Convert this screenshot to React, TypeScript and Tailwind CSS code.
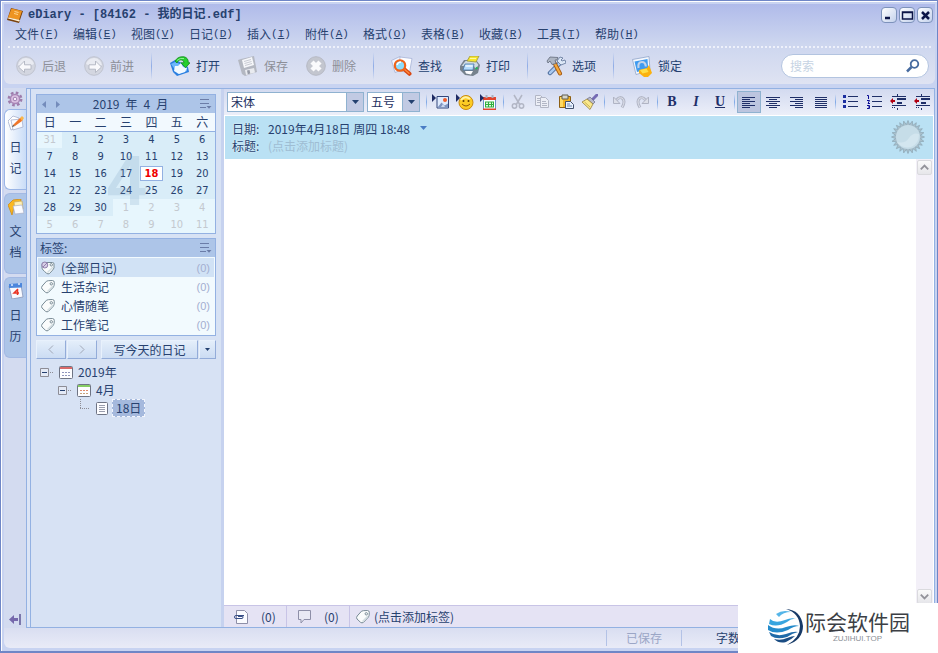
import type { ReactNode } from "react";
import clsx from "clsx";

const MENUS = [
  ["文件", "F"],
  ["编辑", "E"],
  ["视图", "V"],
  ["日记", "D"],
  ["插入", "I"],
  ["附件", "A"],
  ["格式", "O"],
  ["表格", "B"],
  ["收藏", "R"],
  ["工具", "T"],
  ["帮助", "H"],
];

const WEEKDAYS = ["日", "一", "二", "三", "四", "五", "六"];

const WEEKS = [
  [31, 1, 2, 3, 4, 5, 6],
  [7, 8, 9, 10, 11, 12, 13],
  [14, 15, 16, 17, 18, 19, 20],
  [21, 22, 23, 24, 25, 26, 27],
  [28, 29, 30, 1, 2, 3, 4],
  [5, 6, 7, 8, 9, 10, 11],
];

const TAGS = ["(全部日记)", "生活杂记", "心情随笔", "工作笔记"];

/* ---------- toolbar icons ---------- */

function NavIcon({ forward }: { forward?: boolean }) {
  return (
    <svg width="20" height="20" viewBox="0 0 20 20" className={clsx(forward && "-scale-x-100")}>
      <circle cx="10" cy="10" r="9.300" fill="#d3d6e0" stroke="#bfc3cf" />
      <path d="M2 9a8.200 8.200 0 0 1 16-1Q12 12 2 9" fill="#e9ebf2" />
      <path
        d="M8.500 5L2.500 11l6 5.500v-3.300h6.500V8.800H8.500z"
        fill="#f9f9fc"
        stroke="#b0b4c1"
        strokeWidth=".9"
        strokeLinejoin="round"
      />
    </svg>
  );
}

function OpenIcon() {
  return (
    <svg width="20" height="20" viewBox="0 0 20 20">
      <path d="M0 7l5-3 5 2 8 5 1 5-12 4-4-4z" fill="#2b7fe0" />
      <path d="M1 8l4-2 5 2 7 4v3l-9 3z" fill="#6db7fb" />
      <path d="M4 15l1-5 3 0 3-3 2 4 4 1-2 4-6 2z" fill="#f2f9ff" />
      <path
        d="M5 5Q8 0 14 .8q4.500 1 4.300 6H20l-4.500 5-4.500-5h3q0-3-3-3Q8 3.500 7 7z"
        fill="#25cf2e"
        stroke="#128a1c"
        strokeWidth=".8"
      />
      <path d="M7 4.500Q10 1.500 14 2.500" fill="none" stroke="#8cf18f" />
    </svg>
  );
}

function SaveIcon() {
  return (
    <svg width="20" height="20" viewBox="0 0 20 20">
      <path d="M0 4l3-1 13-3 3 16-12 4-3-2z" fill="#b4b8c2" />
      <path d="M4 4l10-3 2 8-10 3z" fill="#f6f7fa" />
      <path d="M7 14l9-2 1 4.500-9 2.500z" fill="#e9ebf0" />
      <path d="M9 14.500l2.500-.5.8 3.500-2.500.7z" fill="#969aa6" />
      <path d="M6 5.500l7-2M6.500 7.500l7-2M7 9.500l7-2" stroke="#c8cbd3" />
    </svg>
  );
}

function DeleteIcon() {
  return (
    <svg width="20" height="20" viewBox="0 0 20 20">
      <circle cx="10" cy="10" r="9.300" fill="#c3c6cf" stroke="#b6b9c4" />
      <path d="M6 6l8 8M14 6l-8 8" stroke="#fafafc" strokeWidth="4.500" />
    </svg>
  );
}

function FindIcon() {
  return (
    <svg width="22" height="20" viewBox="0 0 22 20" className="shrink-0">
      <path d="M.5 4.500L9 .5l3 13-8 3z" fill="#f2f5fe" stroke="#a6b2d6" strokeWidth=".8" />
      <path d="M9 1l12 1.500-2.500 14L8 15z" fill="#fdfdff" stroke="#a6b2d6" strokeWidth=".8" />
      <path d="M13 13l5.500 4.800" stroke="#d94712" strokeWidth="4" strokeLinecap="round" />
      <path d="M13 13l5 4.200" stroke="#ff8a3c" strokeWidth="1.500" strokeLinecap="round" />
      <circle cx="9" cy="9.500" r="5.200" fill="#8edcfb" stroke="#f0641a" strokeWidth="2.200" />
      <path d="M6 9q1-3 4-3" stroke="#fff" fill="none" strokeWidth="1.500" />
    </svg>
  );
}

function PrintIcon() {
  return (
    <svg width="20" height="20" viewBox="0 0 20 20">
      <path d="M0 10l4-6h12l4 5-2 8-5 3-8-1-5-5z" fill="#76828d" />
      <path d="M1.500 10l4-5h10l3 4-3 4-2-4z" fill="#cfdbe3" />
      <path d="M7 5l3-5h9l-3 6z" fill="#f6e52f" stroke="#9c9540" strokeWidth=".8" />
      <path d="M10 2.500h6" stroke="#fff9a0" />
      <path d="M5 8h9l-1 6H3z" fill="#b5dcfc" stroke="#4d76a6" strokeWidth=".8" />
      <path d="M5.500 10h7" stroke="#f2faff" strokeWidth="1.500" />
      <path d="M5 15h8l-2 3.500-5-1z" fill="#fdfdff" />
      <path d="M15.500 13l2-1.500" stroke="#25b459" strokeWidth="2" />
    </svg>
  );
}

function OptionsIcon() {
  return (
    <svg width="20" height="20" viewBox="0 0 20 20">
      <path d="M14 7L4 17" stroke="#4e6d9c" strokeWidth="4.500" strokeLinecap="round" />
      <path d="M14 7L4 17" stroke="#a9c9ef" strokeWidth="2.500" strokeLinecap="round" />
      <path d="M14 1l-3 4 4 4 5-2-1-3-3 1-1-1 2-2z" fill="#dce7f6" stroke="#5f7397" strokeWidth=".8" />
      <path d="M8.500 7L14 17.500" stroke="#a65a13" strokeWidth="4" strokeLinecap="round" />
      <path d="M8.500 7L14 17.500" stroke="#f5a93c" strokeWidth="2.200" strokeLinecap="round" />
      <path d="M1 5l3-4 8 .500-1 2.500H9l1 3.500-4 1-2-3.500-2 2z" fill="#aeb6c4" stroke="#626b7b" strokeWidth=".8" />
    </svg>
  );
}

function LockIcon() {
  return (
    <svg width="20" height="21" viewBox="0 0 20 21">
      <path d="M.5 3.500L17 .5l1 14-14 4z" fill="#f6f9fe" stroke="#8fa4c9" strokeWidth=".8" />
      <path d="M2.500 5.500L15.500 3l.7 10L5 16z" fill="#3f9bf0" />
      <path d="M6.500 12Q5.500 6 10 6q3.500 0 3.800 4.500" fill="none" stroke="#c3d3ea" strokeWidth="2.200" />
      <path d="M7 14l8-2 2-3 3 8-4 4h-4l-5-4z" fill="#fbb10d" />
      <path d="M8 14l6.500-1.500 2 3.500-6 1.500z" fill="#ffdf45" />
    </svg>
  );
}

/* ---------- editor icons ---------- */

const Flag = () => <path d="M0 0l4 4-4 4z" fill="#1e2a63" />;

const PictureIcon = () => (
  <svg width="18" height="16" viewBox="0 0 18 16">
    <path d="M5 2.500h11.500v11.500H5z" fill="#dfeafd" stroke="#33477d" />
    <path d="M5.500 13.500l4-5 3 3 3.500-2v4z" fill="#7f94c0" />
    <path d="M9 13l2-3 2 3z" fill="#c9d6ee" />
    <circle cx="13" cy="6" r="2" fill="#ef5b2c" />
    <Flag />
  </svg>
);

const SmileyIcon = () => (
  <svg width="18" height="16" viewBox="0 0 18 16">
    <circle cx="10" cy="8.500" r="7" fill="#fccb24" stroke="#c98a10" />
    <path d="M5 6q4-5 9-1" stroke="#fff2a0" strokeWidth="2" fill="none" />
    <circle cx="7.500" cy="7" r="1" fill="#5f3c05" />
    <circle cx="12.500" cy="7" r="1" fill="#5f3c05" />
    <path d="M6 10q4 4 8 0" stroke="#8e5709" fill="none" />
    <Flag />
  </svg>
);

const InsertDateIcon = () => (
  <svg width="18" height="16" viewBox="0 0 18 16">
    <path d="M3.500 3.500h12v12h-12z" fill="#fff" stroke="#6a90c8" />
    <path d="M3 3h13v3H3zM3 14.500h13v1.500H3z" fill="#e2452e" />
    <path d="M5 7.500h9v6H5z" fill="#2fae3d" />
    <path d="M6 8.500h2v1.500H6zM9 8.500h2v1.500H9zM12 8.500h1v1.500h-1zM6 11h2v1.500H6zM9 11h2v1.500H9zM12 11h1v1.500h-1z" fill="#dff6df" />
    <path d="M6.500 1v3M12.500 1v3" stroke="#aab0be" strokeWidth="2" />
    <Flag />
  </svg>
);

const CutIcon = () => (
  <svg width="16" height="16" viewBox="0 0 16 16" fill="none" stroke="#b2b6c5">
    <path d="M4 1l6 10M12 1L6 11" strokeWidth="1.500" />
    <circle cx="4.500" cy="12" r="2.200" strokeWidth="1.500" />
    <circle cx="11.500" cy="12" r="2.200" strokeWidth="1.500" />
  </svg>
);

const CopyIcon = () => (
  <svg width="16" height="16" viewBox="0 0 16 16" fill="#eceef6" stroke="#b2b6c5">
    <path d="M1.500 1.500h5l2 2v8h-7z" />
    <path d="M6.500 3.500h5l3 3v7h-8z" />
    <path d="M3 4.500h3M3 6.500h3M3 8.500h3M8 7.500h4M8 9.500h5M8 11.500h5" />
  </svg>
);

const PasteIcon = () => (
  <svg width="16" height="16" viewBox="0 0 16 16">
    <path d="M1.500 2.500h11v11h-11z" fill="#f4b321" stroke="#8d5f14" />
    <path d="M2 3h3v10H2z" fill="#ffda63" />
    <path d="M4 1h6v4H4z" fill="#d5d5c9" stroke="#615d4c" />
    <path d="M7.500 7.500h5l3 3v4h-8z" fill="#e9f2ff" stroke="#42516f" />
    <path d="M9 10h3M9 12h5" stroke="#6d84ac" />
  </svg>
);

const BrushIcon = () => (
  <svg width="16" height="16" viewBox="0 0 16 16">
    <path d="M11 5l4-4" stroke="#756bb4" strokeWidth="3" strokeLinecap="round" />
    <path d="M8 3l5 5-2 2-6-5z" fill="#b9bacb" stroke="#666a85" strokeWidth=".7" />
    <path d="M5 5l6 5-3 5.500L0 8z" fill="#fae98c" stroke="#978040" strokeWidth=".8" />
    <path d="M2.500 8l5.500 5" stroke="#cdb34f" />
  </svg>
);

const TurnIcon = ({ redo }: { redo?: boolean }) => (
  <svg
    width="16"
    height="16"
    viewBox="0 0 16 16"
    className={clsx(redo && "-scale-x-100")}
    fill="none"
  >
    <path d="M5 6.500q3-4 6-2.500 4 3 0 9.500" stroke="#b4b8c8" strokeWidth="3" />
    <path d="M5 6.500q3-4 6-2.500 4 3 0 9.500" stroke="#dcdfe9" />
    <path d="M2.500 3v6.500H9z" fill="#dcdfe9" stroke="#b0b4c4" />
  </svg>
);

const AlignIcon = ({ d }: { d: string }) => (
  <svg width="14" height="13" viewBox="0 0 14 13" stroke="#1f2f68" fill="none">
    <path d={d} />
  </svg>
);

const ALIGNS = [
  { label: "左对齐", d: "M0 1.500h13M0 3.500h8M0 5.500h13M0 7.500h8M0 9.500h13M0 11.500h8" },
  { label: "居中", d: "M0 1.500h14M3 3.500h8M0 5.500h14M3 7.500h8M0 9.500h14M3 11.500h8" },
  { label: "右对齐", d: "M0 1.500h13M5 3.500h8M0 5.500h13M5 7.500h8M0 9.500h13M5 11.500h8" },
  { label: "两端对齐", d: "M1 1.500h12M1 3.500h12M1 5.500h12M1 7.500h12M1 9.500h12M1 11.500h12" },
];

const BulletIcon = () => (
  <svg width="15" height="14" viewBox="0 0 15 14">
    <path d="M0 0h3v3H0zM0 5h3v3H0zM0 10h3v3H0z" fill="#1c2fa0" />
    <path d="M5 1.500h10M5 6.500h10M5 11.500h10" stroke="#1f2f68" />
  </svg>
);

const NumberIcon = () => (
  <svg width="15" height="14" viewBox="0 0 15 14" fill="none">
    <path d="M0 .5h1.500V4M0 5.500h2.500L1 8.500h2M0 10.500h2.500v3H0M1 12h1" stroke="#0b0d94" />
    <path d="M5 1.500h10M5 6.500h10M5 11.500h10" stroke="#1f2f68" />
  </svg>
);

const IndentIcon = () => (
  <svg width="16" height="16" viewBox="0 0 16 16" fill="none">
    <path d="M7.500 0v2M7.500 14v2" stroke="#1f2f68" />
    <path d="M2 2.500h14M2 11.500h14" stroke="#1f2f68" />
    <path d="M2 13.500h4" stroke="#1f2f68" strokeDasharray="1 1" />
    <path d="M7 4h9v2H7zM7 8h5v2H7z" fill="#1f2f68" />
    <path d="M0 7l3-3v6z" fill="#b00012" />
    <path d="M2 7h3" stroke="#b00012" strokeWidth="2" />
  </svg>
);

/* ---------- sidebar icons ---------- */

const GearIcon = () => (
  <svg width="16" height="16" viewBox="0 0 16 16" fill="none">
    <circle cx="8" cy="8" r="6.200" stroke="#9d7cab" strokeWidth="2.500" strokeDasharray="2.600 2.270" />
    <circle cx="8" cy="8" r="4.600" fill="#dcc3e3" stroke="#a886b6" strokeWidth="1.500" />
    <circle cx="8" cy="8" r="1.800" fill="#f5effa" stroke="#9f7fb0" />
  </svg>
);

const DiaryIcon = () => (
  <svg width="16" height="16" viewBox="0 0 16 16">
    <path d="M0 6l5-5 6 2-3 10-5 2z" fill="#fff" stroke="#a7b0cd" strokeWidth=".8" />
    <path d="M3 5l11-1 1 8-10 3z" fill="#fafbff" stroke="#a7b0cd" strokeWidth=".8" />
    <path d="M5 10L12 3l3 0-1 3-7 5z" fill="#f0762a" />
    <path d="M12 3l2-2 2 2-2 3z" fill="#f9b64b" />
    <path d="M5 10l-1 2 3-1z" fill="#513a2a" />
  </svg>
);

const FolderIcon = () => (
  <svg width="16" height="16" viewBox="0 0 16 16">
    <path d="M0 6l5-5 8-1-1 5-6 3-2 8z" fill="#fbb81f" stroke="#d18b14" strokeWidth=".8" />
    <path d="M6 3l8-1 1 8-8 2z" fill="#fff0b5" stroke="#c9a757" strokeWidth=".7" />
    <path d="M5 7l9-1 2 8-9 1z" fill="#fbfbff" stroke="#a9afc4" strokeWidth=".7" />
  </svg>
);

const CalendarTabIcon = () => (
  <svg width="16" height="16" viewBox="0 0 16 16">
    <path d="M1 3l12-1 2 12-11 2z" fill="#f9faff" stroke="#8997b8" strokeWidth=".8" />
    <path d="M1 1l13-1v4.500L1 5z" fill="#4c87dc" />
    <path d="M4 1v2M11 0v2" stroke="#dce8fb" strokeWidth="1.500" />
    <path d="M10 6l-4 4h5M9.500 6v6" stroke="#ea3524" strokeWidth="1.500" fill="none" />
  </svg>
);

function TagIcon({ all }: { all?: boolean }) {
  return (
    <svg width="14" height="14" viewBox="0 0 14 14">
      <path
        d={
          all
            ? "M3 1.500h8.500q1.500 0 1.500 1.500v4q-.5 1.500-4.500 5.500-1.500 1-3-.3Q1 8.500 1 7V3.500q0-2 2-2"
            : "M5.500 1.200q.8-.7 6-.7 1.700 0 1.800 2 0 3.500-.8 4.500l-5 5.300q-1.500 1.200-3 0L1 9q-1-1.500.2-3z"
        }
        fill="#fafcfc"
        stroke="#788b96"
      />
      <path d="M6.500 11.500L12 6" stroke="#d3dee2" strokeWidth="1.500" />
      <circle cx="10.300" cy="3.800" r="1.200" fill="#fff" stroke="#788b96" />
      {all && <circle cx="3.800" cy="4" r="3" fill="#d7cee6" stroke="#9280ad" />}
      {all && <path d="M2 6l4-4" stroke="#9280ad" />}
    </svg>
  );
}

const MonthIcon = ({ green }: { green?: boolean }) => (
  <svg width="14" height="13" viewBox="0 0 14 13">
    <rect x=".5" y=".5" width="13" height="12" rx="1" fill="#fdfdff" stroke="#6e7484" />
    <path d="M1 1h12v2H1z" fill={green ? "#86cd65" : "#d96a6a"} />
    <path d="M3 6h2v1H3zM6 6h2v1H6zM9 6h2v1H9z" fill={green ? "#e08c6d" : "#8f95bd"} />
    <path d="M3 9h2v1H3zM6 9h2v1H6zM9 9h2v1H9z" fill={green ? "#c8a27c" : "#8f95bd"} />
  </svg>
);

const PageIcon = () => (
  <svg width="12" height="13" viewBox="0 0 12 13">
    <rect x=".5" y=".5" width="11" height="12" rx="1" fill="#fdfdff" stroke="#6e7484" />
    <path d="M3 3.500h6M3 5.500h6M3 7.500h6M3 9.500h6" stroke="#9a9eae" />
  </svg>
);

const ListMenuIcon = () => (
  <svg width="12" height="10" viewBox="0 0 12 10">
    <path d="M0 .5h9M0 4.500h9M0 8.500h6" stroke="#6b7da8" />
    <path d="M6.500 7h5L9 9.800z" fill="#6b7da8" />
  </svg>
);

const Expander = () => (
  <svg width="14" height="9" viewBox="0 0 14 9">
    <path d="M.5.5h8v8h-8z" fill="#e4eaf6" stroke="#8d8d96" />
    <path d="M2 4.500h5" stroke="#24406f" />
    <path d="M10 4.500h4" stroke="#8d8d96" strokeDasharray="1 1" />
  </svg>
);

const DownArrow = () => (
  <svg width="7" height="4" viewBox="0 0 7 4" fill="currentColor">
    <path d="M0 0h7L3.500 4z" />
  </svg>
);

function ToolButton({
  icon,
  label,
  disabled,
}: {
  icon: ReactNode;
  label: string;
  disabled?: boolean;
}) {
  return (
    <button
      className={clsx(
        "flex h-7 w-[68px] shrink-0 items-center gap-1.5 pl-[9px] whitespace-nowrap",
        disabled ? "text-[#8d8f98]" : "text-[#23406f]",
      )}
      disabled={disabled}
    >
      <span className="flex w-5 shrink-0 justify-center">{icon}</span>
      {label}
    </button>
  );
}

const ToolDivider = () => (
  <span className="flex w-[18px] shrink-0 pl-2">
    <span className="h-7 w-px bg-linear-to-b from-transparent via-[#8face6] to-transparent" />
  </span>
);

function EditButton({
  children,
  label,
  active,
}: {
  children: ReactNode;
  label: string;
  active?: boolean;
}) {
  return (
    <button
      aria-label={label}
      className={clsx(
        "flex h-[22px] w-6 shrink-0 items-center justify-center",
        active && "border border-[#8fb2d0] bg-[#bcc5df]",
      )}
    >
      {children}
    </button>
  );
}

const EditDivider = () => (
  <span className="flex w-[5px] shrink-0 justify-center">
    <span className="h-4 w-px bg-linear-to-b from-transparent via-[#7fa8e6] to-transparent" />
  </span>
);

function Combo({ label, value, className }: { label: string; value: string; className: string }) {
  return (
    <span className={clsx("relative flex h-5 shrink-0", className)}>
      <select
        aria-label={label}
        className="w-full appearance-none border border-[#8fb2d0] bg-white pl-[3px] text-[12px] text-[#1c2f60]"
      >
        <option>{value}</option>
      </select>
      <span className="pointer-events-none absolute inset-y-px right-px flex w-[17px] items-center justify-center border-l border-[#8fb2d0] bg-[#c1cae3] text-[#23406f]">
        <DownArrow />
      </span>
    </span>
  );
}

function Header() {
  return (
    <header className="rounded-b-md bg-linear-to-b from-[#b0bbea] via-[#cdd6ef] to-[#dfe3f2]">
      <div className="flex h-[22px] items-center pr-0.5 pl-[3px]">
        <svg width="16" height="15" viewBox="0 0 16 15">
          <path d="M4 0l12 3-4 12L0 12z" fill="#7a420d" />
          <path d="M4.500 .5L15 3l-3 9L1 9.500z" fill="#ee9422" />
          <path d="M1 10.500l11 3 1-1.500L1.500 9.500z" fill="#fff3d8" />
          <path d="M7.500 3.500l4 1M7 5.500l4 1" stroke="#ffd792" />
        </svg>
        <h1 className="ml-[5px] flex-1 font-['Liberation_Mono','Noto_Sans_CJK_SC',monospace] text-[12px] leading-5 font-bold text-[#27416f]">
          eDiary - [84162 - 我的日记.edf]
        </h1>
        <div className="flex gap-0.5">
          {["M3 10h5", "M2.500 4h10v7h-10zM2.500 4.500h10", "M4 4l7 7M11 4l-7 7"].map((d, i) => (
            <button
              key={d}
              aria-label={["最小化", "最大化", "关闭"][i]}
              className="flex size-4 items-center justify-center rounded-[4px] border border-[#7d92bb] bg-linear-to-br from-white to-[#c3d1ec]"
            >
              <svg
                width="15"
                height="15"
                viewBox="0 0 15 15"
                fill="none"
                stroke="#0c1547"
                strokeWidth={i === 1 ? 1.5 : 2.5}
                className="shrink-0"
              >
                <path d={d} />
              </svg>
            </button>
          ))}
        </div>
      </div>

      <nav className="flex h-4 items-center pl-1">
        {MENUS.map(([name, key]) => (
          <button
            key={key}
            className="flex h-4 w-[58px] items-center justify-center whitespace-nowrap text-[#27416f]"
          >
            {name}
            <span className="font-['Liberation_Mono',monospace] text-[11px]">
              (<u>{key}</u>)
            </span>
          </button>
        ))}
      </nav>

      <div className="mx-1 mt-1 border-b-2 border-dotted border-[#eef1fb]" />

      <div className="flex h-9 items-center pr-1.5 pl-[3px]">
        <ToolButton icon={<NavIcon />} label="后退" disabled />
        <ToolButton icon={<NavIcon forward />} label="前进" disabled />
        <ToolDivider />
        <ToolButton icon={<OpenIcon />} label="打开" />
        <ToolButton icon={<SaveIcon />} label="保存" disabled />
        <ToolButton icon={<DeleteIcon />} label="删除" disabled />
        <ToolDivider />
        <ToolButton icon={<FindIcon />} label="查找" />
        <ToolButton icon={<PrintIcon />} label="打印" />
        <ToolDivider />
        <ToolButton icon={<OptionsIcon />} label="选项" />
        <ToolDivider />
        <ToolButton icon={<LockIcon />} label="锁定" />
        <label className="ml-auto flex h-6 w-[148px] items-center rounded-full border border-[#b3c4e0] bg-white pr-2 pl-2">
          <input
            aria-label="搜索"
            placeholder="搜索"
            className="min-w-0 flex-1 outline-none placeholder:text-[#c6d3e3]"
          />
          <svg width="14" height="14" viewBox="0 0 14 14" fill="none" stroke="#466a9f">
            <circle cx="8.500" cy="5" r="3.800" strokeWidth="1.800" />
            <path d="M5.500 8L1 12.500" strokeWidth="2.500" />
          </svg>
        </label>
      </div>
    </header>
  );
}

const RAIL = [
  { name: "日记", icon: <DiaryIcon /> },
  { name: "文档", icon: <FolderIcon /> },
  { name: "日历", icon: <CalendarTabIcon /> },
];

function Rail() {
  return (
    <div className="flex w-[22px] shrink-0 flex-col items-center bg-[#d3dbf0]">
      <button aria-label="设置" className="flex h-[21px] items-center">
        <GearIcon />
      </button>
      <div className="flex w-full flex-col gap-[3px]">
        {RAIL.map(({ name, icon }, i) => (
          <button
            key={name}
            className={clsx(
              "flex flex-col items-center gap-[5px] rounded-l-md border border-r-0 pt-[5px] pb-[11px]",
              i === 0
                ? "border-[#9ab5e6] bg-linear-to-r from-white to-[#c9dcf7]"
                : "border-[#a3b9e3] bg-[#adc5e8]",
            )}
          >
            {icon}
            <span className="w-3 leading-[21px] break-all">{name}</span>
          </button>
        ))}
      </div>
      <button aria-label="折叠侧栏" className="mt-auto mb-0.5">
        <svg width="12" height="13" viewBox="0 0 12 13">
          <path d="M0 6.500L5 2v3h4v3H5v3z" fill="#7568ac" />
          <path d="M11 1v11" stroke="#5e5796" strokeWidth="1.500" />
        </svg>
      </button>
    </div>
  );
}

function Calendar() {
  return (
    <section className="relative border border-[#93b1e2] bg-[#f2f9fe]">
      <div className="flex h-[18px] items-center bg-[#adc5e8] pr-[3px] pl-[5px]">
        <button aria-label="上个月">
          <svg width="5" height="7" viewBox="0 0 5 7">
            <path d="M4 0v7L0 3.500z" fill="#748cbb" />
          </svg>
        </button>
        <button aria-label="下个月" className="ml-[9px]">
          <svg width="5" height="7" viewBox="0 0 5 7">
            <path d="M0 0v7l4-3.500z" fill="#748cbb" />
          </svg>
        </button>
        <span className="flex flex-1 justify-center gap-1.5">
          <span>2019</span>
          <span>年</span>
          <span>4</span>
          <span>月</span>
        </span>
        <button aria-label="日历选项">
          <ListMenuIcon />
        </button>
      </div>
      <table className="w-full table-fixed border-collapse text-center">
        <thead>
          <tr className="h-[18px] border-b border-[#93b1e2]">
            {WEEKDAYS.map((day) => (
              <th key={day} className="p-0 leading-[17px] font-normal">
                {day}
              </th>
            ))}
          </tr>
        </thead>
        <tbody className="font-['DejaVu_Sans_Condensed','DejaVu_Sans',sans-serif] text-[11px]">
          {WEEKS.map((week, row) => (
            <tr key={row} className="h-[17px]">
              {week.map((day, col) => {
                const outside = (row === 0 && day > 20) || (row > 3 && day < 20);
                const today = row === 2 && day === 18;
                return (
                  <td
                    key={col}
                    className={clsx(
                      "p-0 leading-[15px]",
                      outside ? "bg-[#e7f6fd] text-[#c4c9cf]" : "bg-[#d9edf8]",
                    )}
                  >
                    {today ? (
                      <span className="mx-px block border border-[#93b1e2] bg-white leading-[13px] font-bold text-[#f00000]">
                        18
                      </span>
                    ) : (
                      day
                    )}
                  </td>
                );
              })}
            </tr>
          ))}
        </tbody>
      </table>
      <span
        aria-hidden
        className="pointer-events-none absolute top-[51px] left-[70px] font-['Liberation_Sans',sans-serif] text-[70px] leading-[70px] font-bold text-[#7399c0]/20"
      >
        4
      </span>
    </section>
  );
}

function Sidebar() {
  return (
    <aside className="w-[190px] shrink-0 bg-[#d7e2f4] px-[5px] pt-[5px]">
      <Calendar />

      <section className="mt-1 border border-[#93b1e2] bg-[#f2fafe]">
        <div className="flex h-[18px] items-center justify-between bg-[#adc5e8] pr-[3px] pl-[3px]">
          <h2>标签:</h2>
          <button aria-label="标签选项">
            <ListMenuIcon />
          </button>
        </div>
        <ul className="p-px">
          {TAGS.map((tag, i) => (
            <li key={tag} className={clsx("flex h-[19px] items-center pr-1 pl-[3px]", i === 0 && "bg-[#d1e2f5]")}>
              <TagIcon all={i === 0} />
              <span className="ml-1.5 flex-1">{tag}</span>
              <span className="font-['Liberation_Sans',sans-serif] text-[11px] text-[#a3aed0]">(0)</span>
            </li>
          ))}
        </ul>
      </section>

      <div className="mt-1 flex h-[19px] gap-px *:flex *:items-center *:justify-center *:border *:border-[#93acd9] *:border-t-[#e8f1fc] *:border-l-[#e8f1fc] *:bg-linear-to-b *:from-[#e4eefa] *:to-[#cbdcf3]">
        <button aria-label="前一篇" className="w-[30px]">
          <svg width="6" height="9" viewBox="0 0 6 9" fill="none" stroke="#a0a7b6">
            <path d="M5 .5l-4 4 4 4" />
          </svg>
        </button>
        <button aria-label="后一篇" className="w-[30px]">
          <svg width="6" height="9" viewBox="0 0 6 9" fill="none" stroke="#a0a7b6">
            <path d="M1 .5l4 4-4 4" />
          </svg>
        </button>
        <button className="ml-[3px] flex-1 whitespace-nowrap">写今天的日记</button>
        <button aria-label="更多" className="w-[17px]">
          <svg width="5" height="3" viewBox="0 0 5 3">
            <path d="M0 0h5L2.500 3z" fill="#23406f" />
          </svg>
        </button>
      </div>

      <ul className="mt-1 pl-1 leading-[18px]">
        <li>
          <span className="flex h-[18px] items-center gap-[5px]">
            <Expander />
            <MonthIcon />
            2019年
          </span>
          <ul className="pl-[18px]">
            <li>
              <span className="flex h-[18px] items-center gap-[5px]">
                <Expander />
                <MonthIcon green />
                4月
              </span>
              <ul className="pl-[22px]">
                <li className="flex h-[18px] items-center">
                  <svg width="10" height="18" viewBox="0 0 10 18" fill="none" stroke="#8d8d96" strokeDasharray="1 1">
                    <path d="M.5 0v9M0 9.500h10" />
                  </svg>
                  <span className="ml-1.5">
                    <PageIcon />
                  </span>
                  <span className="ml-1 border border-dashed border-[#f2f5fc] bg-[#a5b9dd] px-[3px] leading-4">
                    18日
                  </span>
                </li>
              </ul>
            </li>
          </ul>
        </li>
      </ul>
    </aside>
  );
}

// 24 spikes, every other point pulled in
const SEAL = Array.from({ length: 48 }, (_, i) => {
  const r = i % 2 ? 12.5 : 16.5;
  const a = (i * Math.PI) / 24;
  return `${(17 + r * Math.sin(a)).toFixed(1)},${(17 - r * Math.cos(a)).toFixed(1)}`;
}).join(" ");

function Editor() {
  return (
    <main className="flex min-w-0 flex-1 flex-col bg-white">
      <div className="flex h-[27px] shrink-0 items-center overflow-hidden border-b border-white bg-linear-to-b from-[#d3daf0] to-[#eceff9] pl-[3px]">
        <Combo label="字体" value="宋体" className="w-[137px]" />
        <Combo label="字号" value="五号" className="ml-[3px] w-[53px]" />
        <span className="ml-1">
          <EditDivider />
        </span>
        <EditButton label="插入图片"><PictureIcon /></EditButton>
        <EditButton label="插入表情"><SmileyIcon /></EditButton>
        <EditButton label="插入日期"><InsertDateIcon /></EditButton>
        <EditDivider />
        <EditButton label="剪切"><CutIcon /></EditButton>
        <EditButton label="复制"><CopyIcon /></EditButton>
        <EditButton label="粘贴"><PasteIcon /></EditButton>
        <EditButton label="格式刷"><BrushIcon /></EditButton>
        <EditDivider />
        <EditButton label="撤销"><TurnIcon /></EditButton>
        <EditButton label="重做"><TurnIcon redo /></EditButton>
        <EditDivider />
        <div className="flex font-['Liberation_Serif',serif] text-[14px] font-bold text-[#1f2f68]">
          <EditButton label="加粗">B</EditButton>
          <EditButton label="倾斜"><i>I</i></EditButton>
          <EditButton label="下划线"><u>U</u></EditButton>
        </div>
        <EditDivider />
        {ALIGNS.map(({ label, d }, i) => (
          <EditButton key={label} label={label} active={i === 0}>
            <AlignIcon d={d} />
          </EditButton>
        ))}
        <EditDivider />
        <EditButton label="项目符号"><BulletIcon /></EditButton>
        <EditButton label="编号"><NumberIcon /></EditButton>
        <EditButton label="减少缩进"><IndentIcon /></EditButton>
        <EditButton label="增加缩进"><IndentIcon /></EditButton>
      </div>

      <div className="mr-px ml-px flex h-[43px] shrink-0 items-center justify-between bg-[#bae1f4] pr-2 pb-0.5 pl-[7px]">
        <div className="leading-[17px]">
          <div className="flex">
            <span className="w-9 text-shadow-[0_0_2px_white]">日期:</span>
            <button className="flex items-center gap-2.5">
              <span className="whitespace-nowrap">2019年4月18日 周四 18:48</span>
              <span className="text-[#4a7cc4]">
                <DownArrow />
              </span>
            </button>
          </div>
          <label className="flex">
            <span className="w-9 text-shadow-[0_0_2px_white]">标题:</span>
            <input placeholder="(点击添加标题)" className="h-[17px] w-64 outline-none placeholder:text-[#9fbdd3]" />
          </label>
        </div>
        <svg width="34" height="34" viewBox="0 0 34 34">
          <polygon points={SEAL} fill="#a9bfcb" stroke="#8fa9b8" strokeWidth=".8" />
          <circle cx="17" cy="17" r="12" fill="#c6dde8" />
          <path d="M6 22q8 2 12-4t10-4q0 10-8 13-9 2-14-5" fill="#d3e6ef" />
        </svg>
      </div>

      <div className="flex min-h-0 flex-1">
        <textarea aria-label="正文" className="flex-1 resize-none p-2 outline-none" />
        <div className="mr-px flex w-[17px] flex-col justify-between bg-[#f3f0f8] p-px">
          {["M3 9l4-4 4 4", "M3 5l4 4 4-4"].map((d, i) => (
            <button
              key={d}
              aria-label={i ? "向下滚动" : "向上滚动"}
              className="flex h-[15px] items-center justify-center rounded-xs border border-[#dadade] bg-linear-to-b from-[#fafafa] to-[#e6e6ea]"
            >
              <svg width="13" height="13" viewBox="0 0 14 14" fill="none" stroke="#93939a" strokeWidth="2">
                <path d={d} />
              </svg>
            </button>
          ))}
        </div>
      </div>

      <div className="flex h-[22px] shrink-0 items-center border-t border-[#c8c4e6] bg-[#e5e3f4]">
        <button className="flex h-full w-[63px] items-center gap-3 border-r border-[#c8c4e6] pl-2.5">
          <svg width="15" height="14" viewBox="0 0 15 14" fill="none">
            <path d="M2.500.5h8l3 3v10h-11z" fill="#fbfbff" stroke="#8e8fa8" />
            <path d="M10 5.500H2Q.5 5.500.5 7t1.500 1.500h6Q9 8.500 9 7T8 6.500H4" stroke="#394f87" />
          </svg>
          (0)
        </button>
        <button className="flex h-full w-[63px] items-center gap-3 border-r border-[#c8c4e6] pl-2.5">
          <svg width="15" height="14" viewBox="0 0 15 14">
            <path d="M1.500.5h12v9H7l-3 3.500V9.500H1.500z" fill="#e9e9f4" stroke="#8e8fa8" />
          </svg>
          (0)
        </button>
        <button className="flex h-full items-center gap-1 pl-1.5">
          <TagIcon />
          (点击添加标签)
        </button>
      </div>
    </main>
  );
}

function SiteBadge() {
  return (
    <div className="absolute right-0 bottom-0 flex h-[50px] w-[200px] items-start bg-white pt-1 pl-[29px] font-['Noto_Sans_CJK_SC',sans-serif]">
      <svg width="38" height="40" viewBox="0 0 38 40" fill="none">
        <path d="M19 2Q34 3 36 19 36 33 20 38 33 31 33 19 32 6 19 2" fill="#173a67" />
        <path d="M9 7q7-5 15-2-8 0-12 5z" fill="#55b5e8" />
        <path d="M3 12q5 5 15 1 7-3 11-1-4-1-9 3-10 6-18 2z" fill="#38a5df" />
        <path d="M1 18q8 6 18 2 9-3 13-1-5 0-11 4-12 5-20 0z" fill="#248bcb" />
        <path d="M2 25q8 5 17 2 8-3 12-2-5 1-11 5-10 3-16-1z" fill="#1f6aa8" />
        <path d="M7 32q7 2 13-1 5-2 8-2-3 3-9 6-7 2-12-3" fill="#1b4d83" />
      </svg>
      <div className="flex flex-col items-center pt-0.5 text-[#3c3f45]">
        <span className="text-[21px] leading-6">际会软件园</span>
        <span className="mt-0.5 font-['Liberation_Sans',sans-serif] text-[8px] leading-2 text-[#8c9097]">
          ZUJIHUI.TOP
        </span>
      </div>
    </div>
  );
}

export default function App() {
  return (
    <div className="relative bg-[#c8d3f1]">
      <div className="flex h-screen flex-col border border-b-2 border-[#6f86c6] font-['Noto_Sans_CJK_SC',sans-serif] text-[12px] leading-4 text-[#27416f]">
        <div className="flex min-h-0 flex-1 flex-col border-t border-l border-white p-0.5 pb-[3px]">
          <Header />

          <div className="mt-1 flex min-h-0 flex-1">
            <Rail />
            <div className="flex min-w-0 flex-1 border border-[#93b1e2] bg-[#dce5f6]">
              <span className="w-1 shrink-0 border-r border-[#93b1e2]" />
              <Sidebar />
              <span className="w-[3px] shrink-0 bg-[#c6d2ef]" />
              <Editor />
            </div>
          </div>

          <footer className="flex h-5 shrink-0 items-center justify-end rounded-b-md bg-linear-to-b from-[#d9def1] to-[#e9ebf7] pr-[179px]">
            <span className="w-[76px] border-x border-[#b3c2e6] text-center text-[#9ba6c6]">已保存</span>
            <span className="ml-[34px] w-10 whitespace-nowrap">字数: 0</span>
          </footer>
        </div>
      </div>
      <SiteBadge />
    </div>
  );
}
